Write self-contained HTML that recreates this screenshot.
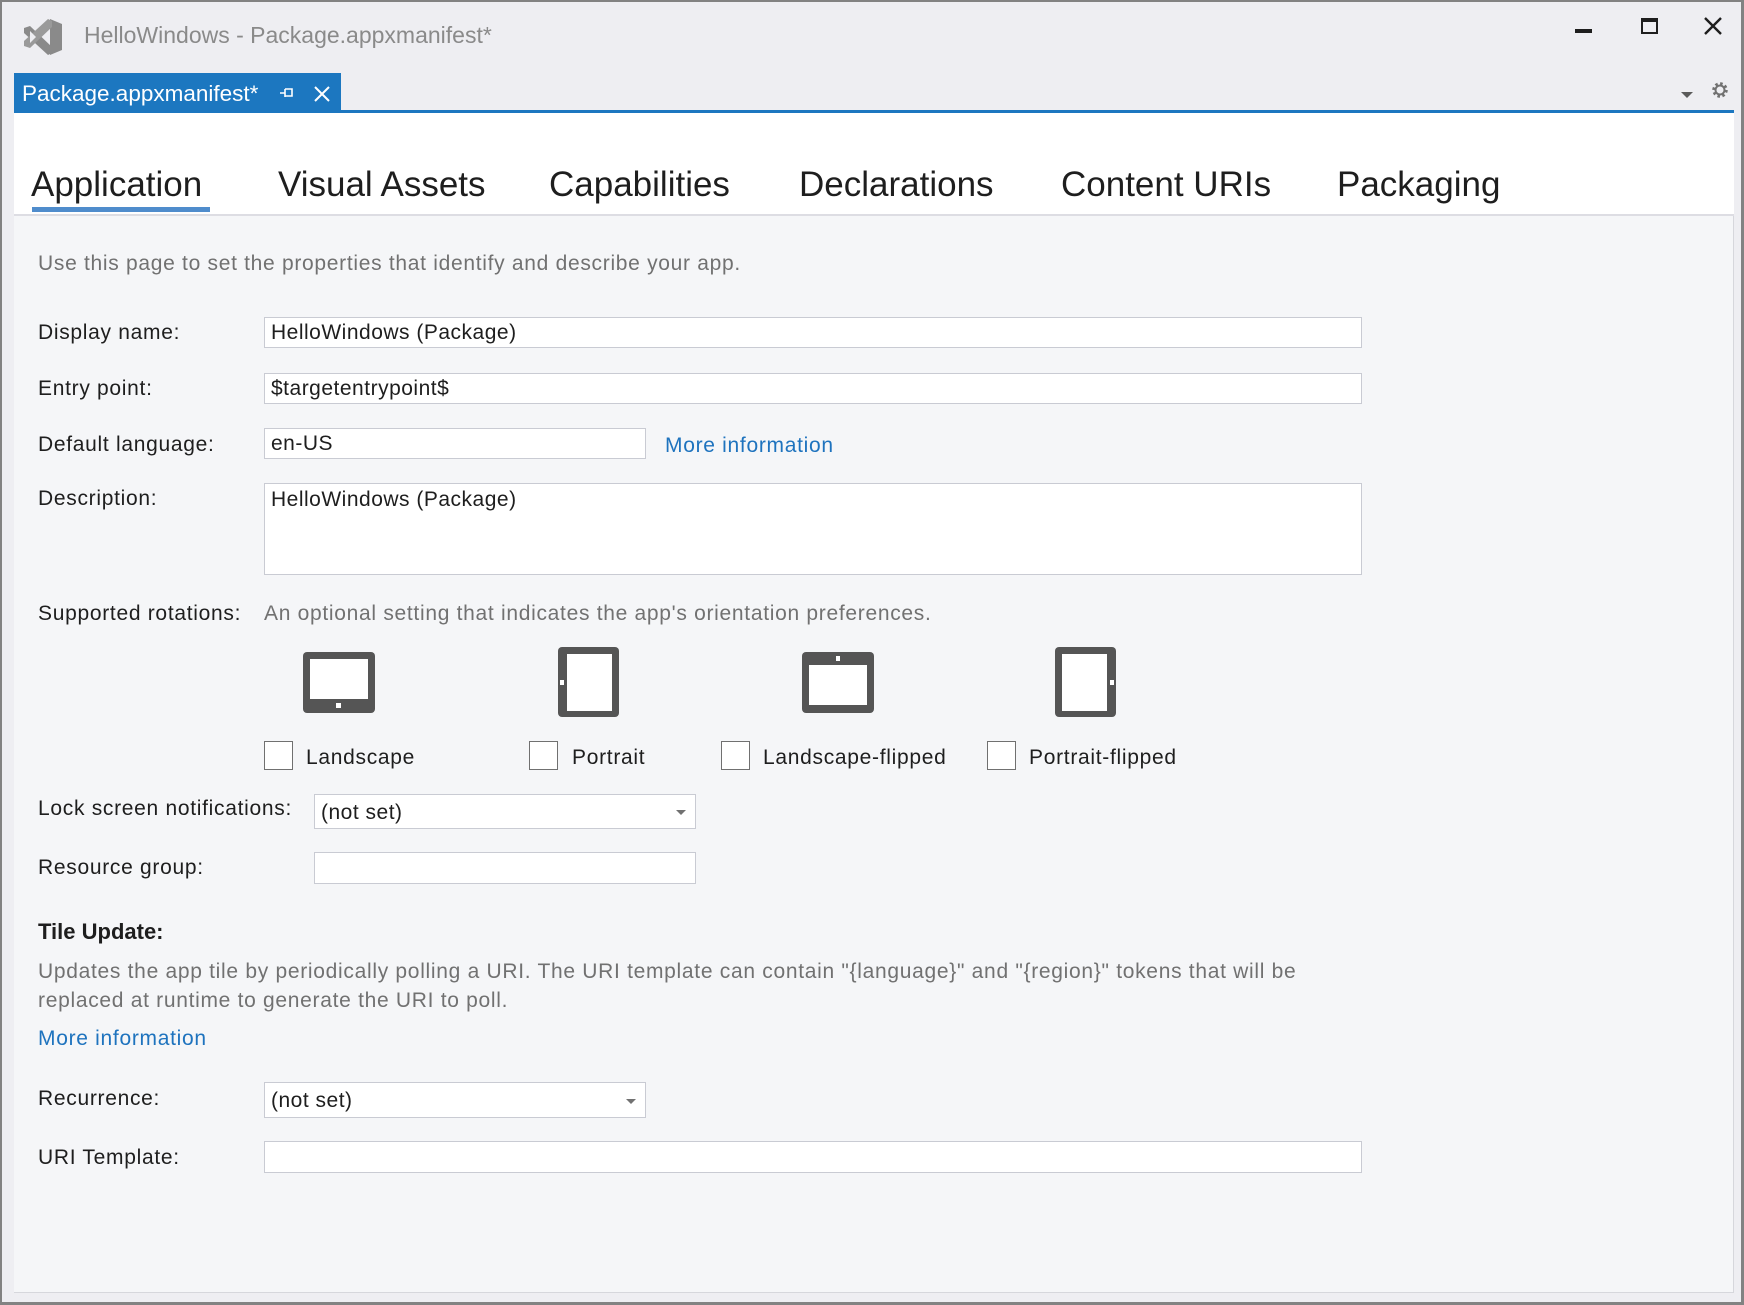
<!DOCTYPE html>
<html><head><meta charset="utf-8"><style>
*{margin:0;padding:0;box-sizing:border-box}
body{width:1744px;height:1305px;background:#eeeef2;font-family:"Liberation Sans",sans-serif;position:relative;overflow:hidden;color:#1e1e1e}
.a{position:absolute;white-space:nowrap}
.frame{position:absolute;left:0;top:0;width:1744px;height:1305px;border:2px solid #828282;border-right-width:3px;border-bottom-width:3px}
.lbl{font-size:21px;line-height:24px;letter-spacing:0.7px;margin-top:2px}
.inp{position:absolute;background:#fff;border:1px solid #c9cbd3;font-size:21px;letter-spacing:0.5px;padding-left:6px;line-height:30px}
.gray{color:#717171}
.link{color:#1e73be}
.cb{position:absolute;width:29px;height:29px;border:1px solid #707070;background:#fff}
.tab{position:absolute;top:163px;font-size:35px;line-height:44px;color:#1e1e1e}
.arrow{position:absolute;width:0;height:0;border-left:5px solid transparent;border-right:5px solid transparent;border-top:5px solid #717171}
</style></head><body>
<div class="frame"></div>
<svg class="a" style="left:22px;top:17px" width="42" height="40" viewBox="0 0 42 40">
<path d="M28 2 L40 7 L40 33 L28 38 Z" fill="#8a8a8a"/>
<path d="M2 11 L8 9 L30 30 L30 36 L26 38 L2 16Z" fill="#8a8a8a"/>
<path d="M2 29 L8 31 L30 10 L30 4 L26 2 L2 24Z" fill="#9a9a9a"/>
<path d="M8 14 L14 20 L8 26Z" fill="#eeeef2"/>
</svg>
<div class="a" style="left:84px;top:22px;font-size:23px;color:#8a8a8a">HelloWindows - Package.appxmanifest*</div>
<div class="a" style="left:1575px;top:29px;width:17px;height:4px;background:#1e1e1e"></div>
<div class="a" style="left:1641px;top:18px;width:17px;height:16px;border:2px solid #1e1e1e;border-top-width:4px"></div>
<svg class="a" style="left:1703px;top:17px" width="20" height="18"><path d="M2 1 L18 17 M18 1 L2 17" stroke="#1e1e1e" stroke-width="2.4"/></svg>
<div class="a" style="left:14px;top:73px;width:327px;height:40px;background:#1c77c0"></div>
<div class="a" style="left:22px;top:81px;font-size:22.5px;color:#fff">Package.appxmanifest*</div>
<svg class="a" style="left:279px;top:86px" width="16" height="14"><path d="M1 7 H6 M6 3 V11 M6 3 H13 V10 H6" stroke="#fff" stroke-width="1.6" fill="none"/></svg>
<svg class="a" style="left:313px;top:85px" width="18" height="18"><path d="M2 2 L16 16 M16 2 L2 16" stroke="#fff" stroke-width="2"/></svg>
<div class="arrow" style="left:1681px;top:92px;border-top-color:#5a5a5a;border-left-width:6px;border-right-width:6px;border-top-width:6px"></div>
<svg class="a" style="left:1711px;top:81px" width="18" height="18" viewBox="0 0 18 18"><circle cx="9" cy="9" r="6" fill="none" stroke="#717171" stroke-width="3.5" stroke-dasharray="2.4 2.3"/><circle cx="9" cy="9" r="4.5" fill="none" stroke="#717171" stroke-width="2"/></svg>
<div class="a" style="left:14px;top:110px;width:1720px;height:3px;background:#1c77c0"></div>
<div class="a" style="left:14px;top:113px;width:1720px;height:1180px;background:#f5f6f8;border-right:1px solid #d6d7dc;border-bottom:1px solid #d6d7dc"></div>
<div class="a" style="left:14px;top:113px;width:1720px;height:103px;background:#fff;border-bottom:2px solid #dddde3"></div>
<div class="tab" style="left:31px">Application</div>
<div class="tab" style="left:278px">Visual Assets</div>
<div class="tab" style="left:549px">Capabilities</div>
<div class="tab" style="left:799px">Declarations</div>
<div class="tab" style="left:1061px">Content URIs</div>
<div class="tab" style="left:1337px">Packaging</div>
<div class="a" style="left:32px;top:207px;width:178px;height:5px;background:#4f8ccc"></div>

<div class="a lbl gray" style="left:38px;top:250px">Use this page to set the properties that identify and describe your app.</div>
<div class="a lbl" style="left:38px;top:319px">Display name:</div>
<div class="inp" style="left:264px;top:317px;width:1098px;height:31px">HelloWindows (Package)</div>
<div class="a lbl" style="left:38px;top:375px">Entry point:</div>
<div class="inp" style="left:264px;top:373px;width:1098px;height:31px">$targetentrypoint$</div>
<div class="a lbl" style="left:38px;top:431px">Default language:</div>
<div class="inp" style="left:264px;top:428px;width:382px;height:31px">en-US</div>
<div class="a lbl link" style="left:665px;top:432px">More information</div>
<div class="a lbl" style="left:38px;top:485px">Description:</div>
<div class="inp" style="left:264px;top:483px;width:1098px;height:92px;padding-top:1px">HelloWindows (Package)</div>
<div class="a lbl" style="left:38px;top:600px">Supported rotations:</div>
<div class="a lbl gray" style="left:264px;top:600px">An optional setting that indicates the app's orientation preferences.</div>
<svg class="a" style="left:302px;top:651px" width="74" height="63"><rect x="1" y="1" width="72" height="61" rx="4" fill="#555"/><rect x="8" y="8" width="58" height="40" fill="#fff"/><rect x="34" y="52" width="5" height="5" fill="#fff"/></svg>
<svg class="a" style="left:557px;top:646px" width="63" height="72"><rect x="1" y="1" width="61" height="70" rx="4" fill="#555"/><rect x="10" y="8" width="45" height="57" fill="#fff"/><rect x="3" y="34" width="4" height="5" fill="#fff"/></svg>
<svg class="a" style="left:801px;top:651px" width="74" height="63"><rect x="1" y="1" width="72" height="61" rx="4" fill="#555"/><rect x="8" y="14" width="58" height="40" fill="#fff"/><rect x="35" y="5" width="4" height="5" fill="#fff"/></svg>
<svg class="a" style="left:1054px;top:646px" width="63" height="72"><rect x="1" y="1" width="61" height="70" rx="4" fill="#555"/><rect x="8" y="8" width="45" height="57" fill="#fff"/><rect x="56" y="34" width="4" height="5" fill="#fff"/></svg>
<div class="cb" style="left:264px;top:741px"></div><div class="a lbl" style="left:306px;top:744px">Landscape</div>
<div class="cb" style="left:529px;top:741px"></div><div class="a lbl" style="left:572px;top:744px">Portrait</div>
<div class="cb" style="left:721px;top:741px"></div><div class="a lbl" style="left:763px;top:744px">Landscape-flipped</div>
<div class="cb" style="left:987px;top:741px"></div><div class="a lbl" style="left:1029px;top:744px">Portrait-flipped</div>
<div class="a lbl" style="left:38px;top:795px">Lock screen notifications:</div>
<div class="inp" style="left:314px;top:794px;width:382px;height:35px;line-height:35px">(not set)</div>
<div class="arrow" style="left:676px;top:810px"></div>
<div class="a lbl" style="left:38px;top:854px">Resource group:</div>
<div class="inp" style="left:314px;top:852px;width:382px;height:32px"></div>
<div class="a" style="left:38px;top:919px;font-size:22px;font-weight:bold">Tile Update:</div>
<div class="a lbl gray" style="left:38px;top:958px">Updates the app tile by periodically polling a URI. The URI template can contain "{language}" and "{region}" tokens that will be</div>
<div class="a lbl gray" style="left:38px;top:987px">replaced at runtime to generate the URI to poll.</div>
<div class="a lbl link" style="left:38px;top:1025px">More information</div>
<div class="a lbl" style="left:38px;top:1085px">Recurrence:</div>
<div class="inp" style="left:264px;top:1082px;width:382px;height:36px;line-height:36px">(not set)</div>
<div class="arrow" style="left:626px;top:1099px"></div>
<div class="a lbl" style="left:38px;top:1144px">URI Template:</div>
<div class="inp" style="left:264px;top:1141px;width:1098px;height:32px"></div>
</body></html>
